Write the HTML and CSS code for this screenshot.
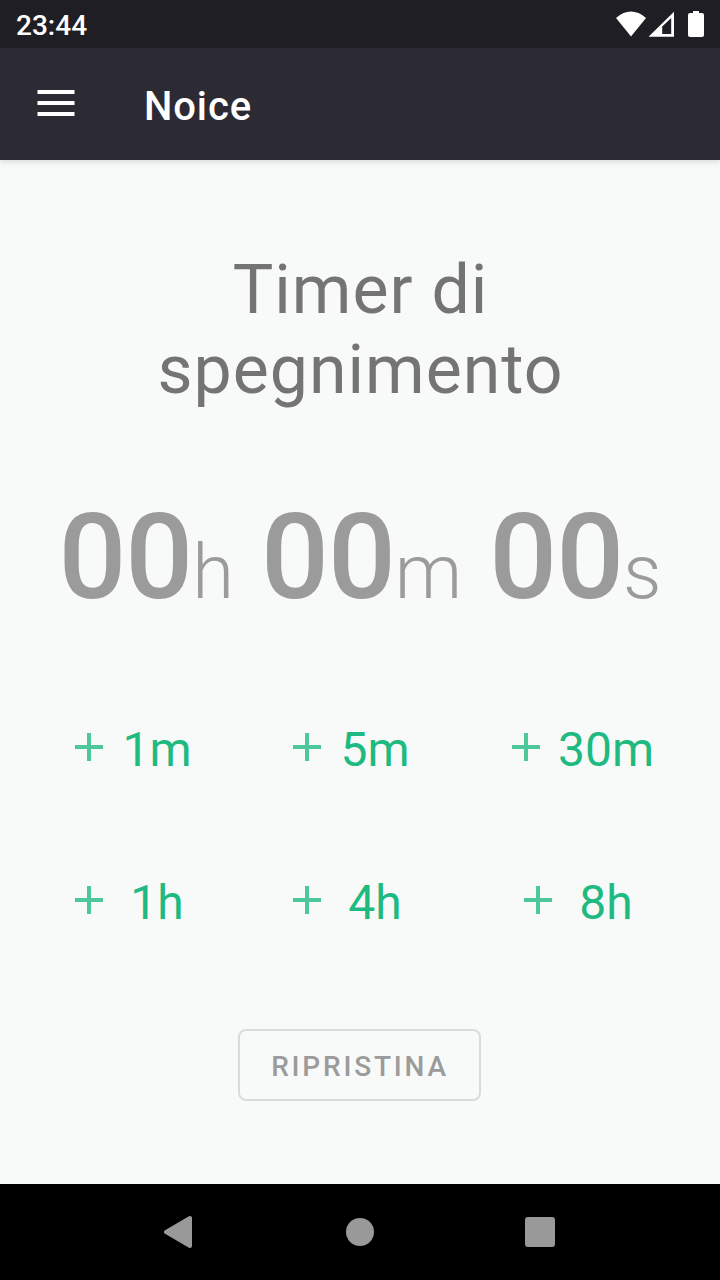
FILE: index.html
```html
<!DOCTYPE html>
<html lang="it">
<head>
<meta charset="utf-8">
<title>Noice</title>
<link rel="stylesheet" href="styles.css">
</head>
<body>
<div class="screen">
  <div class="status-bar">
    <span class="clock">23:44</span>
    <svg class="status-icons" width="92" height="28" viewBox="0 0 92 28">
      <path fill="#fff" d="M0 8Q15-4.800 30 8L15 26.500Z"/>
      <path fill="#fff" fill-rule="evenodd" d="M32.500 26.800L58 1.800V26.800ZM46.200 16.500V24H55.200V8Z"/>
      <path fill="#fff" d="M77 1H83V3H86Q88 3 88 5V25Q88 27 86 27H74Q72 27 72 25V5Q72 3 74 3H77Z"/>
    </svg>
  </div>
  <header class="app-bar">
    <button class="menu" aria-label="Menu">
      <svg width="38" height="28" viewBox="0 0 38 28"><path fill="#fff" d="M.5 1H37.500V5H.5ZM.5 12H37.500V16H.5ZM.5 23H37.500V27H.5Z"/></svg>
    </button>
    <h1 class="app-name">Noice</h1>
  </header>
  <main class="content">
    <h2 class="title">Timer di<br>spegnimento</h2>
    <div class="countdown">
      <div class="part">00<span class="unit">h</span></div>
      <div class="part">00<span class="unit">m</span></div>
      <div class="part">00<span class="unit">s</span></div>
    </div>
    <div class="presets">
      <button class="preset"><i class="plus"></i><span>1m</span></button>
      <button class="preset"><i class="plus"></i><span>5m</span></button>
      <button class="preset"><i class="plus"></i><span>30m</span></button>
      <button class="preset"><i class="plus"></i><span>1h</span></button>
      <button class="preset"><i class="plus"></i><span>4h</span></button>
      <button class="preset"><i class="plus"></i><span>8h</span></button>
    </div>
    <button class="reset">RIPRISTINA</button>
  </main>
  <nav class="nav-bar">
    <svg width="32" height="36" viewBox="0 0 32 36"><path fill="#999" stroke="#999" stroke-width="4" stroke-linejoin="round" d="M2 18L26 4V32Z"/></svg>
    <svg width="32" height="36" viewBox="0 0 32 36"><circle cx="16" cy="18" r="14" fill="#999"/></svg>
    <svg width="32" height="36" viewBox="0 0 32 36"><rect x="1" y="3" width="30" height="30" rx="3" fill="#999"/></svg>
  </nav>
</div>
</body>
</html>
```
FILE: styles.css
```css
* { box-sizing: border-box; }
body { margin: 0; font-family: Roboto, sans-serif; }
h1, h2 { margin: 0; }
button { border: 0; background: none; padding: 0; margin: 0; font-family: inherit; }
.screen { width: 720px; height: 1280px; display: flex; flex-direction: column; background: #f8faf9; overflow: hidden; }
.status-bar { height: 48px; flex: none; background: #1f1e24; display: flex; justify-content: space-between; align-items: flex-start; padding: 10px 12px 0 16px; position: relative; }
.clock { color: #fff; font-size: 28px; font-weight: 500; line-height: 32px; }
.app-bar { height: 112px; flex: none; background: #2c2b34; display: flex; align-items: center; padding-left: 37px; gap: 69px; box-shadow: 0 2px 6px rgba(0, 0, 0, .12); }
.menu { width: 38px; height: 28px; margin-top: -2px; }
.menu svg { display: block; }
.app-name { color: #fff; font-size: 40px; font-weight: 500; line-height: 48px; letter-spacing: .9px; padding-top: 6px; }
.content { flex: 1; display: flex; flex-direction: column; align-items: center; padding-top: 89px; }
.title { color: #747474; font-size: 68px; font-weight: 400; line-height: 80px; letter-spacing: 1px; text-align: center; padding: 1px 0 0 1px; }
.countdown { display: flex; gap: 28px; margin: 77px 1px 0 0; height: 140px; line-height: 140px; color: #9b9b9b; font-size: 119.5px; font-weight: 500; letter-spacing: -1px; white-space: nowrap; }
.unit { font-size: 76px; font-weight: 300; }
.presets { align-self: stretch; display: grid; grid-template-columns: 218px 218px 244px; grid-auto-rows: 96px; row-gap: 57px; margin-top: 72px; padding-left: 26px; }
.preset { display: flex; align-items: center; justify-content: center; gap: 16px; color: #1fba81; font-size: 48px; line-height: 56px; }
.preset span { min-width: 76px; text-align: center; padding: 6px 2px 0; }
.plus { width: 28px; height: 28px; background: linear-gradient(#4cc899, #4cc899) center / 28px 4px no-repeat, linear-gradient(#4cc899, #4cc899) center / 4px 28px no-repeat; }
.reset { width: 243px; height: 72px; margin: 81px 1px 0 0; padding: 2px 0 0 1px; border: 2px solid #dadcdb; border-radius: 8px; color: #9b9b9b; font-size: 28px; font-weight: 500; letter-spacing: 2.8px; }
.nav-bar { height: 96px; flex: none; background: #000; display: flex; justify-content: center; align-items: center; gap: 148px; }
```
